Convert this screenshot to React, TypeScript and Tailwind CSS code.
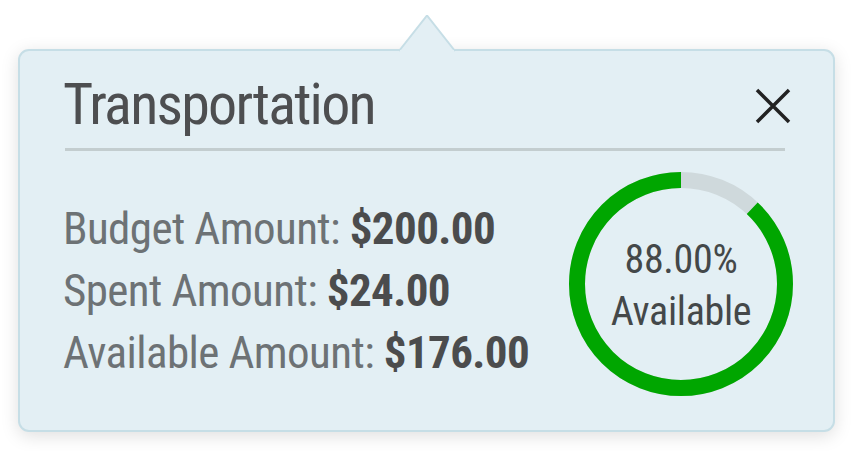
import React from 'react';

const rows = [
    { label: 'Budget Amount:', value: '$200.00' },
    { label: 'Spent Amount:', value: '$24.00' },
    { label: 'Available Amount:', value: '$176.00' },
];

const Donut = ({ available }: { available: number }) => {
    const r = 104;
    const c = 2 * Math.PI * r;
    const used = 1 - available / 100;
    return (
        <div className="relative w-[226px] h-[226px] shrink-0">
            <svg width="226" height="226" viewBox="0 0 226 226" className="-rotate-90">
                <circle cx="113" cy="113" r={r} fill="none" stroke="#cfd9dc" strokeWidth="16" />
                <circle
                    cx="113"
                    cy="113"
                    r={r}
                    fill="none"
                    stroke="#00a600"
                    strokeWidth="16"
                    strokeDasharray={`${(available / 100) * c} ${c}`}
                    strokeDashoffset={-used * c}
                />
            </svg>
            <div className="absolute inset-0 flex flex-col items-center justify-center pt-[4px] text-[40px] leading-[52px] text-[#444849] tracking-[-0.3px]">
                <span>{available.toFixed(2)}%</span>
                <span>Available</span>
            </div>
        </div>
    );
};

export default function App() {
    return (
        <div className="w-[855px] h-[451px] bg-white pt-[49px] pl-[18px] font-['Liberation_Sans_Narrow','Roboto_Condensed','Liberation_Sans',sans-serif]">
            <div className="relative w-[817px] h-[383px] rounded-[11px] border-2 border-[#c6dee6] bg-[#e3eff4] shadow-[0_4px_18px_rgba(0,0,0,0.13)] px-[45px]">
                {/* pointer */}
                <svg className="absolute left-[377px] -top-[36px]" width="60" height="38" viewBox="0 0 60 38">
                    <path d="M2 36 L30 0.5 L58 36" fill="#e3eff4" stroke="#c6dee6" strokeWidth="2" />
                    <rect x="3" y="35" width="54" height="3" fill="#e3eff4" />
                </svg>

                <div className="flex items-center justify-between h-[100px] border-b-[3px] border-[#c3cdcf] mr-[3px]">
                    <h1 className="text-[58px] leading-none text-[#4d4e50] tracking-[-1.75px] mt-[8px] -ml-[2px] whitespace-nowrap">Transportation</h1>
                    <button className="mr-[-6px] mt-[12px]">
                        <svg width="36" height="36" viewBox="0 0 36 36">
                            <path d="M2 2 L34 34 M34 2 L2 34" stroke="#222" strokeWidth="3.5" />
                        </svg>
                    </button>
                </div>

                <div className="flex items-start justify-between">
                    <div className="flex flex-col text-[45px] leading-[62px] tracking-[-0.6px] mt-[47px] -ml-[2px] whitespace-nowrap">
                        {rows.map((row) => (
                            <div key={row.label} className="text-[#6d7275]">
                                {row.label} <span className="font-bold text-[#4b4c4d]">{row.value}</span>
                            </div>
                        ))}
                    </div>
                    <div className="mt-[20px] mr-[-6px]">
                        <Donut available={88} />
                    </div>
                </div>
            </div>
        </div>
    );
}
